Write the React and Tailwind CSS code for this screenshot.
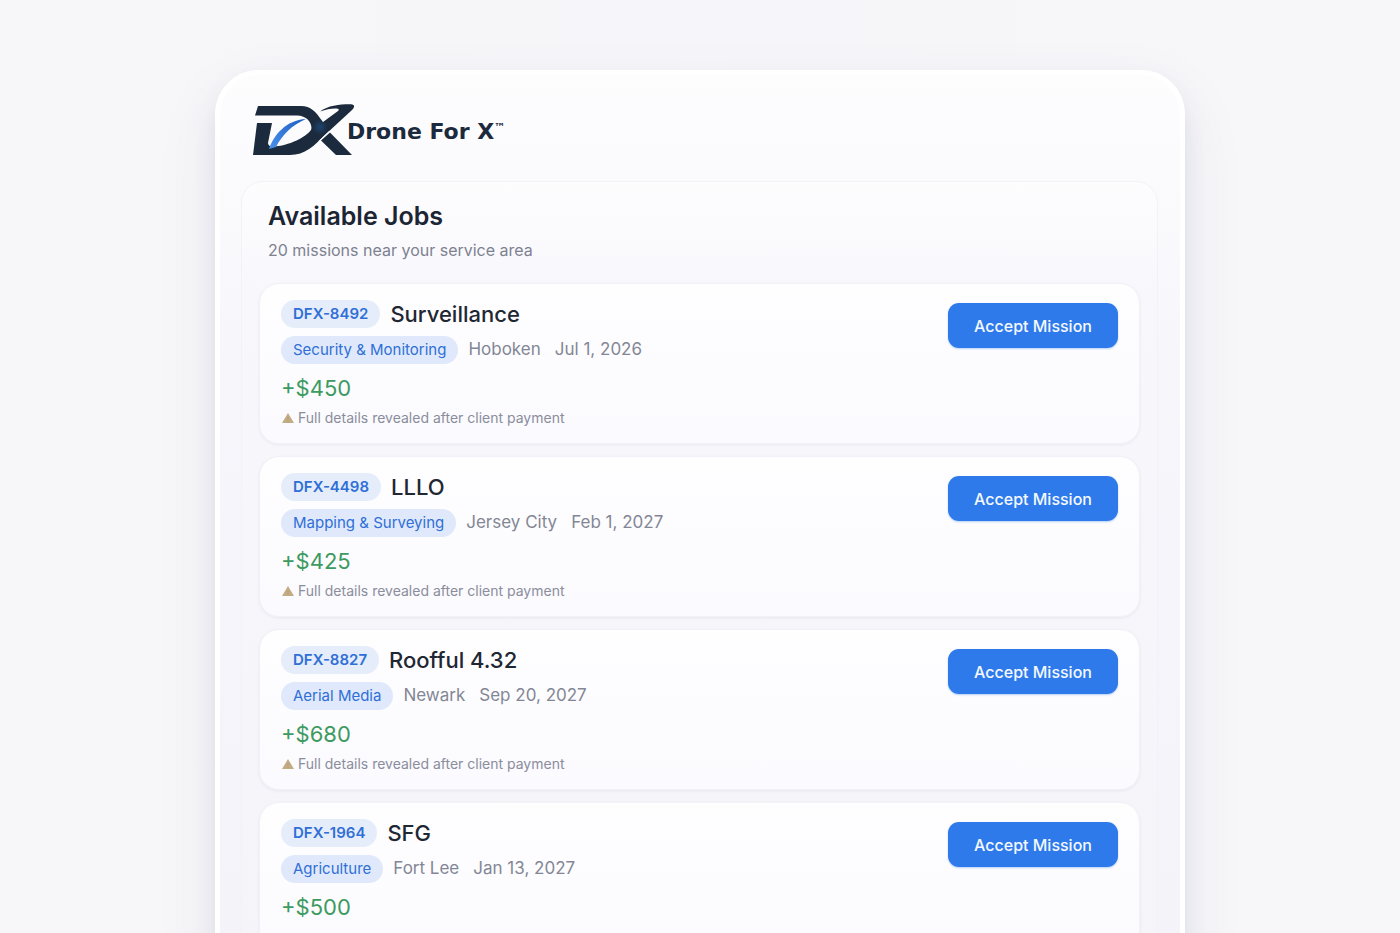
const jobs = [
  { id: 'DFX-8492', title: 'Surveillance', category: 'Security & Monitoring', city: 'Hoboken', date: 'Jul 1, 2026', pay: 450, locked: true },
  { id: 'DFX-4498', title: 'LLLO', category: 'Mapping & Surveying', city: 'Jersey City', date: 'Feb 1, 2027', pay: 425, locked: true },
  { id: 'DFX-8827', title: 'Roofful 4.32', category: 'Aerial Media', city: 'Newark', date: 'Sep 20, 2027', pay: 680, locked: true },
  { id: 'DFX-1964', title: 'SFG', category: 'Agriculture', city: 'Fort Lee', date: 'Jan 13, 2027', pay: 500, locked: false },
]

function Logo() {
  return (
    <div className="flex items-center">
      <svg viewBox="0 0 102 54" className="h-[54px] w-[102px] shrink-0" aria-hidden="true">
        <defs>
          <linearGradient id="swoosh" x1="0" y1="1" x2="1" y2="0">
            <stop offset="0" stopColor="#4a90ea" />
            <stop offset="1" stopColor="#1f5fc4" />
          </linearGradient>
          <radialGradient id="glow" cx="67" cy="24" r="8" gradientUnits="userSpaceOnUse">
            <stop offset="0" stopColor="#1c4470" />
            <stop offset="1" stopColor="#1b2a3c" />
          </radialGradient>
        </defs>
        <path
          d="M5 3H48C58 3 62 8 70 19L85 8C87 6 85 5.500 82 5.500C77 5.500 73 6.500 67 8.500C75 2 89 1 98 1.200C102 1.500 102 4 99 7L73 31C61 43 52 52 37 52H0L4 20H19L15 40C15 42.500 17 43.500 20 43.500C36 43 53 34 58 27C60 22 55 12.500 44 12.500H2Z"
          fill="url(#glow)"
        />
        <path d="M66 38.500L76.500 28.500" stroke="#fcfcfe" strokeWidth="1.200" />
        <path d="M68 37.500L77 29.500L99 52H83Z" fill="#1b2a3c" />
        <path d="M16 46C21 32 33 17 53 16C39 22 29 32 23 44Z" fill="url(#swoosh)" />
      </svg>
      <span className="-ml-2 pt-1 font-['DejaVu_Sans'] text-[22px] leading-6 font-bold text-[#1b2a3c]">
        Drone For X
      </span>
      <span className="mb-1 font-['DejaVu_Sans'] text-[11px] leading-3 font-bold text-[#1b2a3c]">™</span>
    </div>
  )
}

function JobCard({ job }) {
  return (
    <li className="flex min-h-[161px] items-start justify-between gap-4 rounded-[20px] border border-[#f1f1f7] bg-linear-to-b from-[#fefeff] to-[#fbfafe] px-[21px] pt-4 pb-[15px] shadow-[0_1px_3px_rgba(40,50,90,0.07)]">
      <div>
        <div className="flex items-center gap-[10px]">
          <span className="flex h-7 items-center rounded-full bg-[#e5edfb] px-3 text-[15px] font-semibold text-[#2f6fd6]">
            {job.id}
          </span>
          <h2 className="text-[22px] leading-7 font-medium text-[#1f2733]">{job.title}</h2>
        </div>

        <div className="mt-2 flex items-center">
          <span className="flex h-7 items-center rounded-full bg-[#dfe9fb] px-3 text-[15px] text-[#2f6fd6]">
            {job.category}
          </span>
          <span className="ml-[10px] text-[17px] text-[#838795]">{job.city}</span>
          <span className="ml-[14px] text-[17px] text-[#838795]">{job.date}</span>
        </div>

        <p className="mt-2 text-[22px] leading-8 text-[#3d9a60]">+${job.pay}</p>

        {job.locked && (
          <p className="mt-1 flex items-center gap-1 text-sm leading-5 text-[#8a8d9c]">
            <svg viewBox="0 0 12 10" className="ml-px h-[10px] w-3" aria-hidden="true">
              <path d="M6 0L12 10H0Z" fill="#c3ab84" />
              <path d="M6 4V7M6 8V9" stroke="#b39b72" strokeWidth="1" />
            </svg>
            Full details revealed after client payment
          </p>
        )}
      </div>

      <button
        type="button"
        className="mt-[3px] h-[45px] w-[170px] shrink-0 rounded-[11px] bg-[#2f7aeb] text-base font-medium text-[#f4f9ff] shadow-[0_1px_2px_rgba(47,122,235,0.35)] hover:bg-[#2569d6]"
      >
        Accept Mission
      </button>
    </li>
  )
}

export default function App() {
  return (
    <div className="min-h-screen bg-linear-to-r from-[#f7f7f9] via-[#f6f6fa] to-[#f7f7f9] px-6 pt-[70px] pb-16 font-['Inter',sans-serif]">
      <main className="mx-auto max-w-[970px] rounded-[44px] border-[5px] border-white bg-linear-to-b from-[#fdfdfe] via-[#f7f6fb] via-[280px] to-[#f3f3f9] pt-[28px] pr-[22px] pb-6 pl-[21px] shadow-[0_24px_64px_rgba(70,60,130,0.08),0_14px_22px_rgba(60,60,110,0.10)]">

        {/* HEADER */}
        <header className="mb-[24px] ml-[12px]">
          <Logo />
        </header>

        {/* JOBS */}
        <section className="rounded-[22px] border border-[#f2f2f8] bg-linear-to-b from-[#fdfdfe] via-[#f8f7fc] via-[110px] to-[#f4f4f9] px-[17px] pt-[18px] pb-4">
          <div className="mb-[19px] ml-[9px]">
            <h1 className="text-[25px] leading-8 font-semibold text-[#1c2533]">Available Jobs</h1>
            <p className="mt-1 text-base leading-7 text-[#7d8190]">20 missions near your service area</p>
          </div>

          <ul className="flex flex-col gap-3">
            {jobs.map((job) => (
              <JobCard key={job.id} job={job} />
            ))}
          </ul>
        </section>
      </main>
    </div>
  )
}
